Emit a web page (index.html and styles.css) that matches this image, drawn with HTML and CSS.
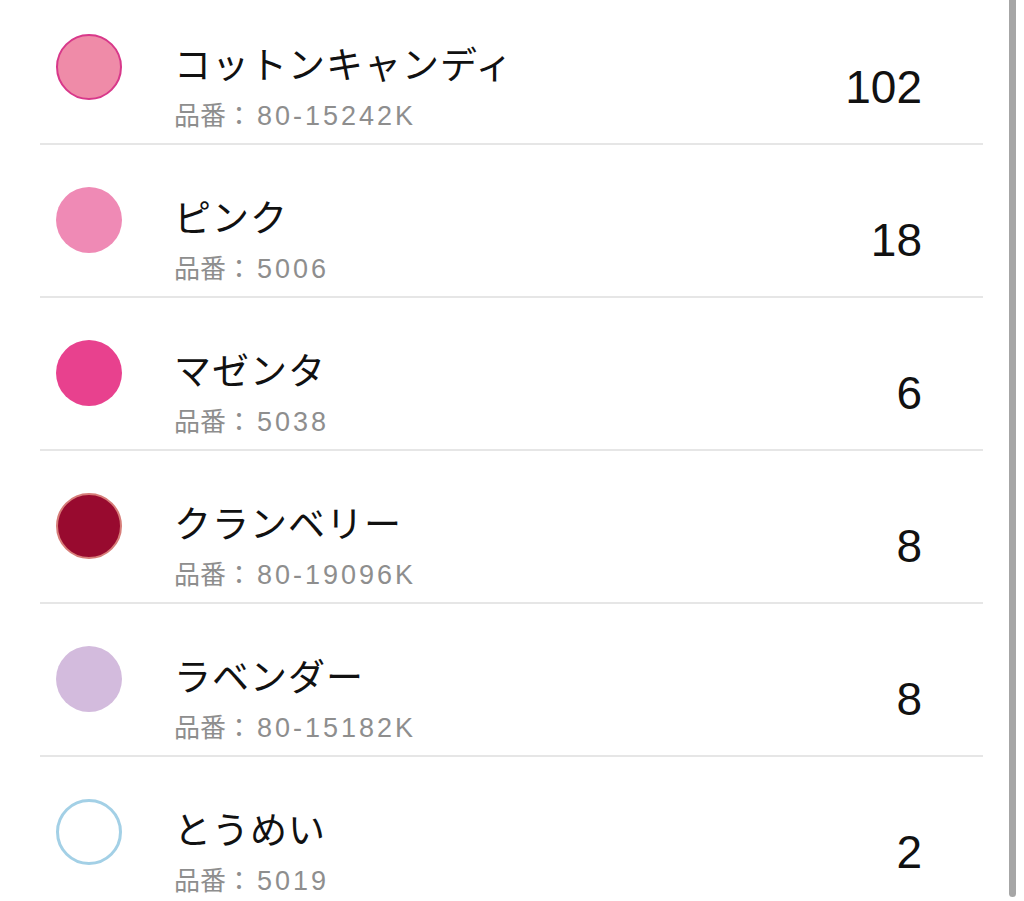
FILE: index.html
```html
<!DOCTYPE html>
<html lang="ja">
<head>
    <meta charset="UTF-8">
    <meta name="viewport" content="width=device-width, initial-scale=1.0">
    <title>カラー一覧</title>
    <link rel="stylesheet" href="styles.css">
</head>
<body>
    <ul class="color-list">
        <li class="color-row">
            <span class="swatch swatch-cotton"></span>
            <div class="info">
                <p class="name">コットンキャンディ</p>
                <p class="code">品番：<span class="code-no">80-15242K</span></p>
            </div>
            <span class="count">102</span>
        </li>
        <li class="color-row">
            <span class="swatch swatch-pink"></span>
            <div class="info">
                <p class="name">ピンク</p>
                <p class="code">品番：<span class="code-no">5006</span></p>
            </div>
            <span class="count">18</span>
        </li>
        <li class="color-row">
            <span class="swatch swatch-magenta"></span>
            <div class="info">
                <p class="name">マゼンタ</p>
                <p class="code">品番：<span class="code-no">5038</span></p>
            </div>
            <span class="count">6</span>
        </li>
        <li class="color-row">
            <span class="swatch swatch-cranberry"></span>
            <div class="info">
                <p class="name">クランベリー</p>
                <p class="code">品番：<span class="code-no">80-19096K</span></p>
            </div>
            <span class="count">8</span>
        </li>
        <li class="color-row">
            <span class="swatch swatch-lavender"></span>
            <div class="info">
                <p class="name">ラベンダー</p>
                <p class="code">品番：<span class="code-no">80-15182K</span></p>
            </div>
            <span class="count">8</span>
        </li>
        <li class="color-row">
            <span class="swatch swatch-clear"></span>
            <div class="info">
                <p class="name">とうめい</p>
                <p class="code">品番：<span class="code-no">5019</span></p>
            </div>
            <span class="count">2</span>
        </li>
    </ul>
    <div class="scroll-indicator"></div>
</body>
</html>
```

FILE: styles.css
```css
/* Page */
body {
    margin: 0;
    background: #ffffff;
    font-family: "Noto Sans CJK JP", sans-serif;
    color: #111111;
    overflow: hidden;
}

/* List */
.color-list {
    list-style: none;
    margin: -8px 41px 0 40px;
    padding: 0;
}

.color-row {
    display: flex;
    align-items: flex-start;
    height: 151px;
    padding: 0 61px 0 16px;
    border-bottom: 2px solid #e6e6e6;
}

/* Colour swatches */
.swatch {
    flex: none;
    width: 66px;
    height: 66px;
    margin-top: 42px;
    border-radius: 50%;
    box-sizing: border-box;
}

.swatch-cotton {
    background: #ef8ba8;
    border: 2px solid #d8388a;
}

.swatch-pink {
    background: #ef8ab5;
}

.swatch-magenta {
    background: #e8418e;
}

.swatch-cranberry {
    background: #980a2f;
    border: 2px solid #d77d79;
}

.swatch-lavender {
    background: #d3bbdd;
}

.swatch-clear {
    background: #ffffff;
    border: 3px solid #a3d0e6;
}

/* Name and product number */
.info {
    flex: 1;
    margin: 49px 0 0 52px;
}

.info p {
    margin: 0;
}

.name {
    font-size: 37px;
    line-height: 44px;
    letter-spacing: 1px;
    color: #111111;
}

.code {
    margin-top: 12px !important;
    font-size: 26px;
    line-height: 34px;
    color: #8e8e8e;
}

.code-no {
    margin-left: 5px;
    font-family: "Liberation Sans", "Noto Sans CJK JP", sans-serif;
    font-size: 27px;
    letter-spacing: 3px;
}

/* Count */
.count {
    flex: none;
    margin-top: 72px;
    font-family: "Liberation Sans", sans-serif;
    font-size: 46px;
    line-height: 46px;
    color: #111111;
}

/* Overlay scroll indicator */
.scroll-indicator {
    position: fixed;
    top: -4px;
    right: 8px;
    width: 7px;
    height: 901px;
    border-radius: 4px;
    background: #a6a6a6;
}
```
